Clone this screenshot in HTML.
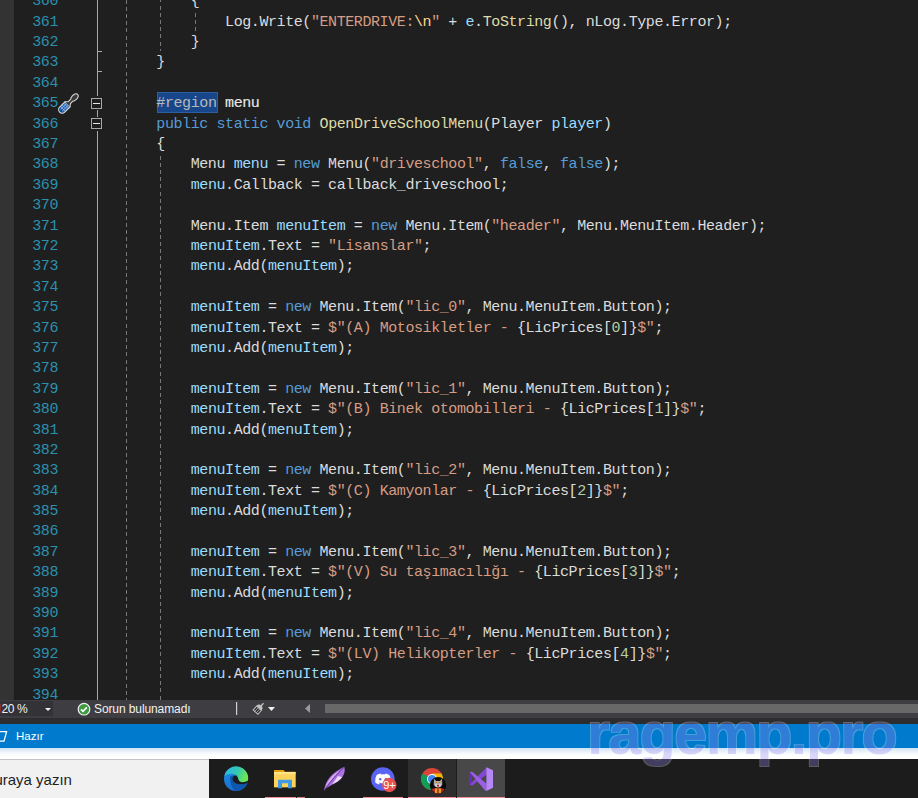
<!DOCTYPE html>
<html><head><meta charset="utf-8"><style>
*{margin:0;padding:0;box-sizing:border-box}
html,body{width:918px;height:798px;overflow:hidden;background:#1f1f1f}
body{position:relative;font-family:"Liberation Sans",sans-serif}
.abs{position:absolute}
.mono{font-family:"Liberation Mono",monospace;font-size:15px;letter-spacing:-0.4145px;white-space:pre;line-height:20.4px}
#code{position:absolute;left:87.67px;top:-7.7px;color:#dcdcdc}
#nums{position:absolute;right:860px;top:-7.7px;color:#2b91af;text-align:right}
.ln{height:20.4px}
.k{color:#569cd6} .s{color:#d69d85} .e{color:#ffd68f} .v{color:#9cdcfe} .y{color:#dcdcaa} .n{color:#b5cea8}
.r{color:#b8b8b8} .rn{color:#e8e8e8;-webkit-text-stroke:0.15px #e8e8e8}
</style></head><body>
<div class="abs" style="left:0;top:0;width:14px;height:700px;background:#333333"></div>
<div class="abs" style="left:14px;top:0;width:1px;height:700px;background:#1b1b1b"></div>
<div class="abs" style="left:156.5px;top:91.7px;width:61.2px;height:21px;background:#17468a;border:1px solid #2e5e9c"></div>
<div id="nums" class="mono"><div class="ln">360</div><div class="ln">361</div><div class="ln">362</div><div class="ln">363</div><div class="ln">364</div><div class="ln">365</div><div class="ln">366</div><div class="ln">367</div><div class="ln">368</div><div class="ln">369</div><div class="ln">370</div><div class="ln">371</div><div class="ln">372</div><div class="ln">373</div><div class="ln">374</div><div class="ln">375</div><div class="ln">376</div><div class="ln">377</div><div class="ln">378</div><div class="ln">379</div><div class="ln">380</div><div class="ln">381</div><div class="ln">382</div><div class="ln">383</div><div class="ln">384</div><div class="ln">385</div><div class="ln">386</div><div class="ln">387</div><div class="ln">388</div><div class="ln">389</div><div class="ln">390</div><div class="ln">391</div><div class="ln">392</div><div class="ln">393</div><div class="ln">394</div></div>
<svg class="abs" style="left:0;top:0" width="918" height="700" viewBox="0 0 918 700">
 <path d="M126 0h1v4h-1zM126 7h1v4h-1zM126 14h1v4h-1zM126 21h1v4h-1zM126 28h1v4h-1zM126 36h1v4h-1zM126 43h1v4h-1zM126 50h1v4h-1zM126 57h1v4h-1zM126 64h1v4h-1zM126 72h1v4h-1zM126 79h1v4h-1zM126 86h1v4h-1zM126 93h1v4h-1zM126 100h1v4h-1zM126 108h1v4h-1zM126 115h1v4h-1zM126 122h1v4h-1zM126 129h1v4h-1zM126 136h1v4h-1zM126 144h1v4h-1zM126 151h1v4h-1zM126 158h1v4h-1zM126 165h1v4h-1zM126 172h1v4h-1zM126 180h1v4h-1zM126 187h1v4h-1zM126 194h1v4h-1zM126 201h1v4h-1zM126 208h1v4h-1zM126 216h1v4h-1zM126 223h1v4h-1zM126 230h1v4h-1zM126 237h1v4h-1zM126 244h1v4h-1zM126 252h1v4h-1zM126 259h1v4h-1zM126 266h1v4h-1zM126 273h1v4h-1zM126 280h1v4h-1zM126 288h1v4h-1zM126 295h1v4h-1zM126 302h1v4h-1zM126 309h1v4h-1zM126 316h1v4h-1zM126 324h1v4h-1zM126 331h1v4h-1zM126 338h1v4h-1zM126 345h1v4h-1zM126 352h1v4h-1zM126 360h1v4h-1zM126 367h1v4h-1zM126 374h1v4h-1zM126 381h1v4h-1zM126 388h1v4h-1zM126 396h1v4h-1zM126 403h1v4h-1zM126 410h1v4h-1zM126 417h1v4h-1zM126 424h1v4h-1zM126 432h1v4h-1zM126 439h1v4h-1zM126 446h1v4h-1zM126 453h1v4h-1zM126 460h1v4h-1zM126 468h1v4h-1zM126 475h1v4h-1zM126 482h1v4h-1zM126 489h1v4h-1zM126 496h1v4h-1zM126 504h1v4h-1zM126 511h1v4h-1zM126 518h1v4h-1zM126 525h1v4h-1zM126 532h1v4h-1zM126 540h1v4h-1zM126 547h1v4h-1zM126 554h1v4h-1zM126 561h1v4h-1zM126 568h1v4h-1zM126 576h1v4h-1zM126 583h1v4h-1zM126 590h1v4h-1zM126 597h1v4h-1zM126 604h1v4h-1zM126 612h1v4h-1zM126 619h1v4h-1zM126 626h1v4h-1zM126 633h1v4h-1zM126 640h1v4h-1zM126 648h1v4h-1zM126 655h1v4h-1zM126 662h1v4h-1zM126 669h1v4h-1zM126 676h1v4h-1zM126 684h1v4h-1zM126 691h1v4h-1zM126 698h1v2h-1zM160 0h1v2h-1zM160 6h1v4h-1zM160 13h1v4h-1zM160 20h1v4h-1zM160 27h1v4h-1zM160 34h1v4h-1zM160 42h1v4h-1zM160 49h1v2h-1zM195 13h1v4h-1zM195 20h1v4h-1zM195 27h1v4h-1zM160 156h1v4h-1zM160 163h1v4h-1zM160 170h1v4h-1zM160 177h1v4h-1zM160 184h1v4h-1zM160 192h1v4h-1zM160 199h1v4h-1zM160 206h1v4h-1zM160 213h1v4h-1zM160 220h1v4h-1zM160 228h1v4h-1zM160 235h1v4h-1zM160 242h1v4h-1zM160 249h1v4h-1zM160 256h1v4h-1zM160 264h1v4h-1zM160 271h1v4h-1zM160 278h1v4h-1zM160 285h1v4h-1zM160 292h1v4h-1zM160 300h1v4h-1zM160 307h1v4h-1zM160 314h1v4h-1zM160 321h1v4h-1zM160 328h1v4h-1zM160 336h1v4h-1zM160 343h1v4h-1zM160 350h1v4h-1zM160 357h1v4h-1zM160 364h1v4h-1zM160 372h1v4h-1zM160 379h1v4h-1zM160 386h1v4h-1zM160 393h1v4h-1zM160 400h1v4h-1zM160 408h1v4h-1zM160 415h1v4h-1zM160 422h1v4h-1zM160 429h1v4h-1zM160 436h1v4h-1zM160 444h1v4h-1zM160 451h1v4h-1zM160 458h1v4h-1zM160 465h1v4h-1zM160 472h1v4h-1zM160 480h1v4h-1zM160 487h1v4h-1zM160 494h1v4h-1zM160 501h1v4h-1zM160 508h1v4h-1zM160 516h1v4h-1zM160 523h1v4h-1zM160 530h1v4h-1zM160 537h1v4h-1zM160 544h1v4h-1zM160 552h1v4h-1zM160 559h1v4h-1zM160 566h1v4h-1zM160 573h1v4h-1zM160 580h1v4h-1zM160 588h1v4h-1zM160 595h1v4h-1zM160 602h1v4h-1zM160 609h1v4h-1zM160 616h1v4h-1zM160 624h1v4h-1zM160 631h1v4h-1zM160 638h1v4h-1zM160 645h1v4h-1zM160 652h1v4h-1zM160 660h1v4h-1zM160 667h1v4h-1zM160 674h1v4h-1zM160 681h1v4h-1zM160 688h1v4h-1zM160 696h1v4h-1z" fill="#787878"/>
 <rect x="97" y="0" width="1" height="96" fill="#a8a8a8"/>
 <rect x="97" y="110" width="1" height="7" fill="#a8a8a8"/>
 <rect x="97" y="131" width="1" height="569" fill="#a8a8a8"/>
 <rect x="97" y="51" width="5" height="1" fill="#a8a8a8"/>
 <rect x="97" y="71" width="5" height="1" fill="#a8a8a8"/>
 <rect x="91.5" y="98.5" width="10" height="10" fill="#1f1f1f" stroke="#a8a8a8" stroke-width="1"/>
 <rect x="93" y="103" width="7" height="1" fill="#e8e8e8"/>
 <rect x="91.5" y="118.5" width="10" height="10" fill="#1f1f1f" stroke="#a8a8a8" stroke-width="1"/>
 <rect x="93" y="123" width="7" height="1" fill="#e8e8e8"/>
 <g transform="translate(68.6 103.3) rotate(-44.7)">
  <path d="M-9 -3.6H-1.6V3.6H-9A3.6 3.6 0 0 1 -9 -3.6Z" fill="#1a60b2"/>
  <path d="M-9.5 -3.4A3.6 3.6 0 0 0 -9.5 3.4Z" fill="#0c4690"/>
  <path d="M-10.5 -1.2H-2M-10.5 1.2H-2M-8 -3.4V3.4M-5.6 -3.4V3.4M-3.4 -3.4V3.4" stroke="#a8c8ec" stroke-width="0.65"/>
  <path d="M-9 -3.6H-1.6V3.6H-9A3.6 3.6 0 0 1 -9 -3.6Z" fill="none" stroke="#d8d8d8" stroke-width="1.1"/>
  <path d="M-1.6 -3.6L1 -1.5H4.5C6 -2.8 9.5 -3.2 11.8 -1.8C13 -1 13 1 11.8 1.8C9.5 3.2 6 2.8 4.5 1.5H1L-1.6 3.6" fill="#3a3a3a" stroke="#d8d8d8" stroke-width="1.1" stroke-linejoin="round"/>
 </g>
</svg>
<div id="code" class="mono"><div class="ln">            {</div><div class="ln">                Log.Write(<span class="s">&quot;ENTERDRIVE:</span><span class="e">\n</span><span class="s">&quot;</span> + <span class="v">e</span>.<span class="y">ToString</span>(), nLog.Type.Error);</div><div class="ln">            }</div><div class="ln">        }</div><div class="ln">&#8203;</div><div class="ln">        <span class="r">#region</span> <span class="rn">menu</span></div><div class="ln">        <span class="k">public</span> <span class="k">static</span> <span class="k">void</span> <span class="y">OpenDriveSchoolMenu</span>(Player <span class="v">player</span>)</div><div class="ln">        {</div><div class="ln">            Menu <span class="v">menu</span> = <span class="k">new</span> Menu(<span class="s">&quot;driveschool&quot;</span>, <span class="k">false</span>, <span class="k">false</span>);</div><div class="ln">            <span class="v">menu</span>.Callback = callback_driveschool;</div><div class="ln">&#8203;</div><div class="ln">            Menu.Item <span class="v">menuItem</span> = <span class="k">new</span> Menu.Item(<span class="s">&quot;header&quot;</span>, Menu.MenuItem.Header);</div><div class="ln">            <span class="v">menuItem</span>.Text = <span class="s">&quot;Lisanslar&quot;</span>;</div><div class="ln">            <span class="v">menu</span>.Add(<span class="v">menuItem</span>);</div><div class="ln">&#8203;</div><div class="ln">            <span class="v">menuItem</span> = <span class="k">new</span> Menu.Item(<span class="s">&quot;lic_0&quot;</span>, Menu.MenuItem.Button);</div><div class="ln">            <span class="v">menuItem</span>.Text = <span class="s">$&quot;(A) Motosikletler - </span>{LicPrices[<span class="n">0</span>]}<span class="s">$&quot;</span>;</div><div class="ln">            <span class="v">menu</span>.Add(<span class="v">menuItem</span>);</div><div class="ln">&#8203;</div><div class="ln">            <span class="v">menuItem</span> = <span class="k">new</span> Menu.Item(<span class="s">&quot;lic_1&quot;</span>, Menu.MenuItem.Button);</div><div class="ln">            <span class="v">menuItem</span>.Text = <span class="s">$&quot;(B) Binek otomobilleri - </span>{LicPrices[<span class="n">1</span>]}<span class="s">$&quot;</span>;</div><div class="ln">            <span class="v">menu</span>.Add(<span class="v">menuItem</span>);</div><div class="ln">&#8203;</div><div class="ln">            <span class="v">menuItem</span> = <span class="k">new</span> Menu.Item(<span class="s">&quot;lic_2&quot;</span>, Menu.MenuItem.Button);</div><div class="ln">            <span class="v">menuItem</span>.Text = <span class="s">$&quot;(C) Kamyonlar - </span>{LicPrices[<span class="n">2</span>]}<span class="s">$&quot;</span>;</div><div class="ln">            <span class="v">menu</span>.Add(<span class="v">menuItem</span>);</div><div class="ln">&#8203;</div><div class="ln">            <span class="v">menuItem</span> = <span class="k">new</span> Menu.Item(<span class="s">&quot;lic_3&quot;</span>, Menu.MenuItem.Button);</div><div class="ln">            <span class="v">menuItem</span>.Text = <span class="s">$&quot;(V) Su taşımacılığı - </span>{LicPrices[<span class="n">3</span>]}<span class="s">$&quot;</span>;</div><div class="ln">            <span class="v">menu</span>.Add(<span class="v">menuItem</span>);</div><div class="ln">&#8203;</div><div class="ln">            <span class="v">menuItem</span> = <span class="k">new</span> Menu.Item(<span class="s">&quot;lic_4&quot;</span>, Menu.MenuItem.Button);</div><div class="ln">            <span class="v">menuItem</span>.Text = <span class="s">$&quot;(LV) Helikopterler - </span>{LicPrices[<span class="n">4</span>]}<span class="s">$&quot;</span>;</div><div class="ln">            <span class="v">menu</span>.Add(<span class="v">menuItem</span>);</div><div class="ln">&#8203;</div></div>
<!-- bottom zoom bar -->
<div class="abs" style="left:0;top:700px;width:918px;height:18px;background:#3e3e42"></div>
<div class="abs" style="left:0;top:701px;width:53px;height:15px;background:#333337"></div>
<div class="abs" style="left:0;top:704px;width:1px;height:9px;background:#8a2a2a"></div>
<div class="abs" style="left:1.5px;top:700px;color:#f1f1f1;font-size:12px;line-height:18px;letter-spacing:-0.4px">20 %</div>
<svg class="abs" style="left:0;top:700px" width="918" height="18" viewBox="0 0 918 18">
 <path d="M45 8h6l-3 3z" fill="#f1f1f1"/>
 <circle cx="84" cy="9.2" r="5.8" fill="#3d9a40" stroke="#f0f0f0" stroke-width="1.2"/>
 <path d="M81 9.4l2 2 3.8-4" fill="none" stroke="#ffffff" stroke-width="1.6"/>
 <rect x="236" y="2" width="1.2" height="13" fill="#d0d0d0"/>
 <g transform="translate(259 8.2) rotate(42)">
  <path d="M0 -3V-6.2" stroke="#c8c8c8" stroke-width="1.3" stroke-linecap="round"/>
  <path d="M-3.3 -0.2A3.3 3.2 0 0 1 3.3 -0.2Z" fill="#c4c4c4"/>
  <rect x="-3.2" y="0" width="6.4" height="5.2" fill="#2b2b2e" stroke="#c4c4c4" stroke-width="1"/>
  <path d="M-1.05 0.4V4.9M1.05 0.4V4.9" stroke="#b8b8b8" stroke-width="0.8"/>
 </g>
 <path d="M268 7h7l-3.5 4z" fill="#f1f1f1"/>
 <path d="M310 4v9l-5 -4.5z" fill="#9a9a9a"/>
 <rect x="325" y="4" width="593" height="9" fill="#686868"/>
</svg>
<div class="abs" style="left:94px;top:700px;color:#f1f1f1;font-size:12px;line-height:18px;letter-spacing:-0.1px">Sorun bulunamadı</div>
<div class="abs" style="left:0;top:718px;width:918px;height:6px;background:#2d2d30"></div>
<div class="abs" style="left:0;top:724px;width:918px;height:24px;background:#007acc"></div>
<svg class="abs" style="left:0;top:724px" width="10" height="24"><path d="M-4 7.6H6.6L4 17.1H-6z" fill="none" stroke="#fff" stroke-width="1.3"/></svg>
<div class="abs" style="left:16px;top:724px;color:#fff;font-size:11.5px;line-height:24px">Hazır</div>
<div class="abs" style="left:0;top:748px;width:918px;height:11px;background:linear-gradient(#cde0f2 0px,#e6f0f9 3px,#fafcfe 6px,#ffffff 8px)"></div>
<div class="abs" style="left:0;top:759px;width:918px;height:1px;background:#c4c4c4"></div>
<div class="abs" style="left:0;top:760px;width:209px;height:38px;background:#f1f1f1"></div>
<div class="abs" style="left:-5.6px;top:761px;color:#1e1e1e;font-size:15px;line-height:38px">uraya yazın</div>
<div class="abs" style="left:209px;top:759px;width:709px;height:39px;background:#1c1c1c"></div>
<div class="abs" style="left:408px;top:759px;width:48px;height:39px;background:#2e2e2e"></div>
<div class="abs" style="left:457px;top:759px;width:48px;height:39px;background:#484848"></div>
<div class="abs" style="left:265px;top:797px;width:31px;height:1px;background:#f0909a"></div>
<div class="abs" style="left:297px;top:797px;width:8px;height:1px;background:#d98088"></div>
<div class="abs" style="left:363px;top:797px;width:40px;height:1px;background:#f0909a"></div>
<div class="abs" style="left:408px;top:797px;width:48px;height:1px;background:#f0909a"></div>
<div class="abs" style="left:457px;top:797px;width:48px;height:1px;background:#f0909a"></div>
<svg class="abs" style="left:209px;top:759px" width="709" height="39" viewBox="209 759 709 39">
 <defs>
  <linearGradient id="eg1" x1="0" y1="0" x2="1" y2="0.3"><stop offset="0" stop-color="#2ab5f0"/><stop offset="0.6" stop-color="#35c8b0"/><stop offset="1" stop-color="#6ae656"/></linearGradient>
  <linearGradient id="eg2" x1="0" y1="0" x2="0" y2="1"><stop offset="0" stop-color="#1a90e0"/><stop offset="1" stop-color="#1a6fd0"/></linearGradient>
 </defs>
 <g transform="translate(224 767)">
  <circle cx="12" cy="12" r="12" fill="url(#eg2)"/>
  <path d="M6 9.6C8 8.4 10.5 8.2 12.5 8.5C10 8 8 10 8.5 12.5C9 15 11 16.5 14 17C17 17.5 20.5 17.5 23.2 16.2C21.5 21 17 23.8 12.5 24C7.5 22.5 6 16.5 6 9.6Z" fill="#0f57ae"/>
  <path d="M0.3 9.2C3 6.8 9 5.5 12.5 8.5C14 10 14 12.5 15.2 14C16.5 15.5 21 16 24 13.5A12 12 0 0 0 0.3 9.2Z" fill="url(#eg1)"/>
  <path d="M12.5 8.5C10 8 8 10 8.5 12.5C9 15 11 16.5 14 17C17 17.5 20.5 17.5 23.4 16L23.9 13.6C21 16 16.5 15.5 15.2 14C14 12.5 14 10 12.5 8.5Z" fill="#1c1c1c"/>
 </g>
 <g transform="translate(274 770)">
  <path d="M0 0h9.5l1.6 1.8h10.4v15.4h-21.5z" fill="#e6a00c"/>
  <rect x="0" y="2" width="21.5" height="15.2" fill="#ffd35a"/>
  <rect x="0" y="2" width="21.5" height="2.2" fill="#ffe28e"/>
  <path d="M4 10.2Q4 9.8 4.4 9.8h13.2q0.4 0 0.4 0.4v8h-4v-5h-6v5h-4z" fill="#3f9be6"/>
 </g>
 <path d="M324 790.8C324.5 786 326.5 781 330 777C334 772.5 339.5 769 344.3 766.8C345.2 770 344.8 773.5 342.5 777C340 780.5 336 783 332 784.8C329 786.2 326 788 324 790.8Z" fill="#ad72e0"/>
 <path d="M325.5 787C328 780 333 774.5 339 771C334.5 776 330 781.5 325.5 787Z" fill="#d2b4f2"/>
 <path d="M332 784.3C336 782.8 339.5 780.5 342 777.6C340.5 776.5 339 776 337.5 776.5C336 779 334 782 332 784.3Z" fill="#e9dafa"/>
 <path d="M325 789.5C330 782 336 775 343.8 767.6" fill="none" stroke="#4e1c80" stroke-width="0.7"/>
 <circle cx="382.8" cy="779" r="11.8" fill="#5865f2"/>
 <path d="M376.5 775.2C378 774 379.5 773.6 380.5 773.5L381 774.4C382.3 774.2 383.7 774.2 385 774.4L385.5 773.5C386.5 773.6 388 774 389.5 775.2C390.6 777.5 391 780 390.6 782.7C389.4 783.6 388.2 784.1 387 784.4L386.3 783.2C387 783 387.5 782.7 388 782.3C384.7 783.8 381.3 783.8 378 782.3C378.5 782.7 379 783 379.7 783.2L379 784.4C377.8 784.1 376.6 783.6 375.4 782.7C375 780 375.4 777.5 376.5 775.2Z" fill="#ffffff"/>
 <ellipse cx="380.2" cy="779.2" rx="1.2" ry="1.3" fill="#5865f2"/>
 <ellipse cx="385.8" cy="779.2" rx="1.2" ry="1.3" fill="#5865f2"/>
 <circle cx="389.3" cy="785" r="7.2" fill="#e8504f"/>
 <text x="389.5" y="789" font-family="Liberation Sans" font-size="11" fill="#fff" text-anchor="middle">9+</text>
 <g transform="translate(432 779)">
  <circle r="11" fill="#db4437"/>
  <path d="M0 0L-9.5 -5.5A11 11 0 0 0 0 11Z" fill="#0f9d58"/>
  <path d="M0 0L0 11A11 11 0 0 0 9.5 -5.5Z" fill="#0f9d58"/>
  <path d="M0 -5.5H9.5A11 11 0 0 1 5.5 9.5Z" fill="#f4b400"/>
  <circle r="5" fill="#fff"/>
  <circle r="4" fill="#4285f4"/>
 </g>
 <circle cx="438" cy="785.3" r="8.2" fill="#0a0a0a"/>
 <path d="M431.5 789C433 787.5 443 787.5 444.5 789C443.5 791.5 441 793.5 438 793.5C435 793.5 432.5 791.5 431.5 789Z" fill="#b02a22"/>
 <path d="M435 788.5h6v4.5h-6z" fill="#e0a020"/>
 <path d="M437.2 788.5h1.6v5h-1.6z" fill="#b02a22"/>
 <path d="M434 778.6L436 781H440L442 778.6L442.3 784.5C441 788.5 435 788.5 433.7 784.5Z" fill="#9ea6ae"/>
 <path d="M435 783.5C436 784.5 440 784.5 441 783.5L440.5 786.5C439 787.5 437 787.5 435.5 786.5Z" fill="#d8dde2"/>
 <circle cx="436.4" cy="782.2" r="1" fill="#f0c030"/><circle cx="439.6" cy="782.2" r="1" fill="#f0c030"/>
 <circle cx="436.4" cy="782.3" r="0.5" fill="#d03020"/><circle cx="439.6" cy="782.3" r="0.5" fill="#d03020"/>
 <path d="M436.8 784.8h2.4l-0.5 2h-1.4z" fill="#c81818"/>
 <g transform="translate(469 767)">
  <path d="M0.2 5.8L2.8 4.8V19L0.2 17.8Z" fill="#6a2bbf"/>
  <path d="M17.6 0.3V7.4L3.2 18.6L0.8 17.6Z" fill="#8647d8"/>
  <path d="M1 5.3L2.8 4.6L17.6 16.8V24L15.8 23.2Z" fill="#9b5fe4"/>
  <path d="M17.4 0.2L24 3.2V20.8L17.4 24Z" fill="#b786f7"/>
 </g>
</svg>
<svg width="0" height="0" style="position:absolute"><filter id="wm" x="-2%" y="-10%" width="104%" height="120%" color-interpolation-filters="sRGB">
<feMorphology in="SourceAlpha" operator="dilate" radius="1" result="dil"/>
<feComposite in="dil" in2="SourceAlpha" operator="out" result="edge"/>
<feFlood flood-color="#ffffff" flood-opacity="0.28" result="wf"/>
<feComposite in="wf" in2="edge" operator="in" result="edgec"/>
<feFlood flood-color="rgb(145,134,240)" flood-opacity="0.33" result="cf"/>
<feComposite in="cf" in2="SourceAlpha" operator="in" result="fillc"/>
<feMerge><feMergeNode in="edgec"/><feMergeNode in="fillc"/></feMerge>
</filter></svg>
<div class="abs" style="left:587px;top:699px;font-weight:bold;font-size:59px;color:#000;letter-spacing:-1.55px;line-height:70px;filter:url(#wm)">ragemp.pro</div>
</body></html>
